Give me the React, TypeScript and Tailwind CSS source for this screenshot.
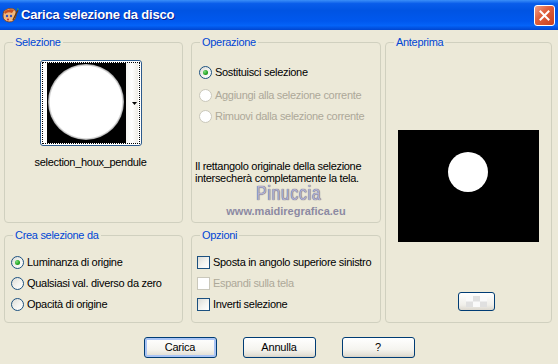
import React from "react";

const font = "font-['Liberation_Sans',Arial,sans-serif]";

function Radio({ checked, disabled }: { checked?: boolean; disabled?: boolean }) {
  return (
    <span
      className={`relative inline-flex h-[13px] w-[13px] shrink-0 items-center justify-center rounded-full border ${
        disabled
          ? "border-[#CAC8BB] bg-white"
          : "border-[#1C5180] bg-[linear-gradient(135deg,#DCDCD7_0%,#F4F4F0_55%,#FFFFFF_100%)]"
      }`}
    >
      {checked && (
        <span className="h-[5px] w-[5px] rounded-full bg-[radial-gradient(circle_at_35%_35%,#7BE07B_0%,#21A121_60%,#1A861A_100%)]" />
      )}
    </span>
  );
}

function Check({ disabled }: { disabled?: boolean }) {
  return (
    <span
      className={`inline-block h-[13px] w-[13px] shrink-0 border ${
        disabled
          ? "border-[#CAC8BB] bg-white"
          : "border-[#1C5180] bg-[linear-gradient(135deg,#DCDCD7_0%,#F4F4F0_55%,#FFFFFF_100%)]"
      }`}
    />
  );
}

function Group({
  title,
  className,
  children,
}: {
  title: string;
  className?: string;
  children?: React.ReactNode;
}) {
  return (
    <div className={`relative rounded-[4px] border border-[#D0D0BF] ${className ?? ""}`}>
      <span className="absolute left-[8px] top-[-8px] bg-[#ECE9D8] px-[2px] text-[11px] leading-[14px] tracking-[-0.3px] text-[#0046D5]">
        {title}
      </span>
      {children}
    </div>
  );
}

function Option({
  label,
  disabled,
  checked,
  box,
}: {
  label: string;
  disabled?: boolean;
  checked?: boolean;
  box?: boolean;
}) {
  return (
    <div className="flex h-[13px] items-center gap-[3px]">
      {box ? <Check disabled={disabled} /> : <Radio checked={checked} disabled={disabled} />}
      <span
        className={`whitespace-nowrap text-[11px] leading-[13px] tracking-[-0.3px] ${
          disabled ? "text-[#ACA899]" : "text-black"
        }`}
      >
        {label}
      </span>
    </div>
  );
}

function XPButton({ label, def }: { label?: string; def?: boolean }) {
  return (
    <button
      className={`flex h-[21px] w-[73px] items-center justify-center rounded-[3px] border border-[#003C74] bg-[linear-gradient(to_bottom,#FFFFFF_0%,#F5F4EF_60%,#E3E0D6_90%,#D6D0C5_100%)] text-[11px] tracking-[-0.2px] text-black ${
        def ? "shadow-[inset_0_0_0_2px_#A9C4F5]" : ""
      }`}
    >
      {label}
    </button>
  );
}

export default function App() {
  return (
    <div className={`h-[364px] w-[558px] overflow-hidden bg-[#ECE9D8] ${font}`}>
      {/* title bar */}
      <div className="flex h-[30px] items-center bg-[linear-gradient(to_bottom,#3B8FF8_0%,#0A5DEA_12%,#0054E3_35%,#0058EE_70%,#0463F8_85%,#0046D0_100%)] pl-[2px] pr-[3px]">
        <svg width="17" height="17" viewBox="0 0 17 17">
          <path d="M2 4 Q6 0 12 2 Q15 4 14 9 Q13 15 7 15 Q1 14 1 9 Q1 6 2 4 Z" fill="#F0B880" stroke="#7A3A10" strokeWidth="0.8" />
          <path d="M2 5 Q6 1 12 3 L10 6 Q6 4 3 7 Z" fill="#C8501E" />
          <circle cx="5" cy="9" r="1.2" fill="#2A50C8" />
          <circle cx="9" cy="9" r="1.2" fill="#2A50C8" />
          <circle cx="6" cy="12.5" r="1" fill="#D02828" />
          <path d="M11 13 L16 3" stroke="#6A3A12" strokeWidth="1.6" />
          <path d="M15 1 L16.8 2 L16 4 Z" fill="#3CB43C" />
        </svg>
        <span className="ml-[2px] text-[13px] font-bold tracking-[-0.2px] text-white [text-shadow:1px_1px_0_#0A1E8C]">
          Carica selezione da disco
        </span>
        <div className="ml-auto flex h-[21px] w-[21px] items-center justify-center rounded-[3px] border border-white bg-[linear-gradient(135deg,#F0A08A_0%,#E0613E_40%,#C8401E_100%)]">
          <svg width="11" height="11" viewBox="0 0 11 11">
            <path d="M1.5 1.5 L9.5 9.5 M9.5 1.5 L1.5 9.5" stroke="white" strokeWidth="2" strokeLinecap="square" />
          </svg>
        </div>
      </div>

      {/* body */}
      <div className="flex pl-[4px] pt-[12px]">
        <div className="grid grid-cols-[179px_190px] grid-rows-[181px_88px] gap-x-[8px] gap-y-[12px]">
          <Group title="Selezione">
            <div className="flex w-[171px] flex-col items-center pt-[17px]">
              <div className="h-[86px] w-[102px] rounded-[3px] border border-[#2C5A8C] bg-white p-[1px]">
                <div className="flex h-full w-full border border-dotted border-black pl-[4px]">
                  <svg width="79" height="80" viewBox="0 0 79 80" className="bg-black">
                    <defs>
                      <radialGradient id="g" cx="0.5" cy="0.5" r="0.5">
                        <stop offset="0.94" stopColor="#fff" />
                        <stop offset="1" stopColor="#999" />
                      </radialGradient>
                    </defs>
                    <circle cx="39" cy="39" r="38" fill="url(#g)" />
                  </svg>
                  <div className="relative flex w-[12px] items-center justify-end bg-[linear-gradient(to_right,#F4F3EE,#FFFFFF,#EDEBE4)] pr-[1px]">
                    <svg width="5" height="3" viewBox="0 0 5 3">
                      <path d="M0 0 H5 L2.5 3 Z" fill="black" />
                    </svg>
                  </div>
                </div>
              </div>
              <div className="mt-[10px] text-[11px] leading-[13px] tracking-[-0.3px] text-black">
                selection_houx_pendule
              </div>
            </div>
          </Group>

          <Group title="Operazione">
            <div className="flex flex-col pl-[7px] pt-[23px]">
              <Option label="Sostituisci selezione" checked />
              <div className="mt-[10px]">
                <Option label="Aggiungi alla selezione corrente" disabled />
              </div>
              <div className="mt-[8px]">
                <Option label="Rimuovi dalla selezione corrente" disabled />
              </div>
            </div>
            <div className="mt-[37px] pl-[3px] text-[11px] leading-[12px] tracking-[-0.3px] text-black">
              Il rettangolo originale della selezione
              <br />
              intersecherà completamente la tela.
            </div>
            <div className="flex flex-col items-center">
              <div className="ml-[6px] mt-[1px] scale-x-[0.78] text-[20px] leading-[16px] tracking-[1px] text-[#B4B2D2] [text-shadow:0_0_1px_#5E5C7A,0_0_1px_#5E5C7A]">
                Pinuccia
              </div>
              <div className="mt-[3px] text-[11px] font-bold leading-[14px] text-[#8C8AA3]">
                www.maidiregrafica.eu
              </div>
            </div>
          </Group>

          <Group title="Crea selezione da">
            <div className="flex flex-col gap-[8px] pl-[6px] pt-[20px]">
              <Option label="Luminanza di origine" checked />
              <Option label="Qualsiasi val. diverso da zero" />
              <Option label="Opacità di origine" />
            </div>
          </Group>

          <Group title="Opzioni">
            <div className="flex flex-col gap-[8px] pl-[5px] pt-[20px]">
              <Option label="Sposta in angolo superiore sinistro" box />
              <Option label="Espandi sulla tela" box disabled />
              <Option label="Inverti selezione" box />
            </div>
          </Group>
        </div>

        <Group title="Anteprima" className="ml-[4px] h-[281px] w-[167px]">
          <div className="flex flex-col items-center pt-[87px]">
            <svg width="141" height="112" viewBox="0 0 141 112" className="bg-black">
              <circle cx="70" cy="42" r="20" fill="white" />
            </svg>
          </div>
          <div className="ml-[72px] mt-[50px] flex h-[19px] w-[37px] items-center justify-center rounded-[3px] border border-[#003C74] bg-[linear-gradient(to_bottom,#FFFFFF,#F0EFEA_70%,#DCD8CE)]">
            <svg width="21" height="11" viewBox="0 0 21 11">
              <rect x="0" y="0" width="21" height="11" fill="#FAFAFA" />
              <rect x="7" y="0" width="7" height="5.5" fill="#E0E0E0" />
              <rect x="0" y="5.5" width="7" height="5.5" fill="#E0E0E0" />
              <rect x="14" y="5.5" width="7" height="5.5" fill="#E0E0E0" />
            </svg>
          </div>
        </Group>
      </div>

      {/* buttons */}
      <div className="mt-[14px] flex justify-center gap-[26px]">
        <XPButton label="Carica" def />
        <XPButton label="Annulla" />
        <XPButton label="?" />
      </div>
    </div>
  );
}
